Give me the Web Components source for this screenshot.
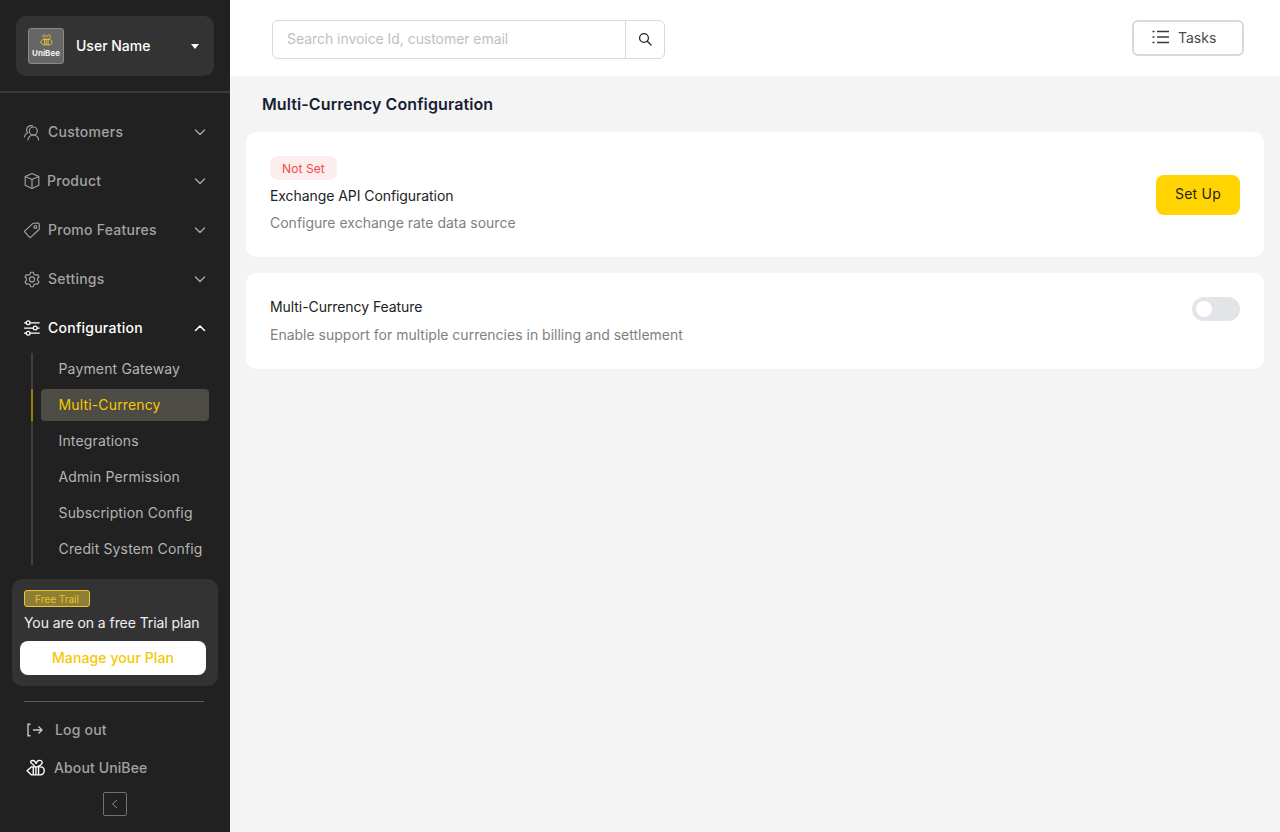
<!DOCTYPE html>
<html><head><meta charset="utf-8"><title>Multi-Currency</title>
<style>
html,body{margin:0;height:100%;}
body{font-family:Inter,"Liberation Sans",sans-serif;font-size:14px;background:#f4f4f4;overflow:hidden}
</style></head><body>
<app-shell>
  <side-bar slot="side">
    <user-card slot="top" name="User Name"></user-card>
    <nav-item label="Customers" icon="users"></nav-item>
    <nav-item label="Product" icon="box" gap="9"></nav-item>
    <nav-item label="Promo Features" icon="tag"></nav-item>
    <nav-item label="Settings" icon="gear"></nav-item>
    <nav-item label="Configuration" icon="sliders" open></nav-item>
    <sub-list>
      <sub-item>Payment Gateway</sub-item>
      <sub-item active>Multi-Currency</sub-item>
      <sub-item>Integrations</sub-item>
      <sub-item>Admin Permission</sub-item>
      <sub-item>Subscription Config</sub-item>
      <sub-item>Credit System Config</sub-item>
    </sub-list>
    <trial-card slot="bottom"></trial-card>
    <foot-links slot="bottom"></foot-links>
  </side-bar>
  <top-bar slot="head"></top-bar>
  <page-title slot="main">Multi-Currency Configuration</page-title>
  <config-card slot="main" style="height:125px">
    <status-tag>Not Set</status-tag>
    <span slot="title">Exchange API Configuration</span>
    <span slot="desc">Configure exchange rate data source</span>
    <yellow-button slot="action">Set Up</yellow-button>
  </config-card>
  <config-card slot="main" style="height:96px" data-top>
    <span slot="title">Multi-Currency Feature</span>
    <span slot="desc">Enable support for multiple currencies in billing and settlement</span>
    <toggle-switch slot="action"></toggle-switch>
  </config-card>
</app-shell>
<script>
const ICONS={
users:'<svg width="18" height="18" viewBox="0 0 18 18" fill="none" stroke="currentColor" stroke-width="1.150" stroke-linecap="round" stroke-linejoin="round"><circle cx="10.300" cy="8" r="4"/><path d="M5 17c0-3 2.500-5 5.300-5s5.300 2 5.300 5"/><path d="M9.500 2.800C6.500 1.900 3.500 4 3.500 7c0 1.200.5 2 1 2.700C3 10.500 1.700 12 1.300 14"/></svg>',
box:'<svg width="18" height="18" viewBox="0 0 18 18" fill="none" stroke="currentColor" stroke-width="1.150" stroke-linejoin="round"><path d="M9 1.500l6.800 3v8.800L9 16.500l-6.800-3.200V4.500z"/><path d="M2.200 4.500L9 7.600l6.800-3.100M9 7.600v8.900"/></svg>',
tag:'<svg width="18" height="18" viewBox="0 0 18 18" fill="none" stroke="currentColor" stroke-width="1.150" stroke-linejoin="round"><path d="M1.300 10.400L9.700 2.600a1.500 1.500 0 0 1 1-.4l4.200-.1a1.300 1.300 0 0 1 1.300 1.300l.1 4.300a1.500 1.500 0 0 1-.5 1.100l-8 7.400a1 1 0 0 1-1.400 0z"/><circle cx="12.300" cy="5.900" r="1.400"/></svg>',
gear:'<svg width="18" height="18" viewBox="0 0 18 18" fill="none" stroke="currentColor" stroke-width="1.150" stroke-linejoin="round"><path d="M7.600 2.200h2.800l.5 2 1.700 1 2-.6 1.400 2.400-1.500 1.500v1.900l1.500 1.500-1.400 2.400-2-.6-1.700 1-.5 2H7.600l-.5-2-1.700-1-2 .6L2 11.900l1.500-1.500V8.500L2 7l1.400-2.400 2 .6 1.700-1z"/><circle cx="9" cy="9.400" r="2.500"/></svg>',
sliders:'<svg width="18" height="18" viewBox="0 0 18 18" fill="none" stroke="currentColor" stroke-width="1.250" stroke-linecap="round"><path d="M7.200 3.800h9M1.500 3.800h1.700M14.200 9h2M1.500 9h8.700M7.200 14.200h9M1.500 14.200h1.700"/><circle cx="5.200" cy="3.800" r="1.900"/><circle cx="12.200" cy="9" r="1.900"/><circle cx="5.200" cy="14.200" r="1.900"/></svg>'
};
const BEE=(c,w,h)=>`<svg width="${w}" height="${h}" viewBox="0 0 18 18" fill="none" stroke="${c}" stroke-width="1.300" stroke-linejoin="round"><path d="M8.400 7.200L6.800 5.300C5.900 4.200 4.300 4 4.300 2.900 4.500 1.300 7.300.8 8.300 2.300L9.500 4.200 10.700 2.300C11.800.8 15 1 15.300 3c.2 1.700-1.900 3.100-4.300 4.200"/><path d="M5 7.500h8.500c2.200 0 3.800 1.600 3.800 3.700s-1.600 3.800-3.800 3.800H5L1 11.200z"/><path d="M6.900 7.500V15M9.400 7.500V15M11.900 7.500V15"/></svg>`;
function def(name,css,html){
  customElements.define(name,class extends HTMLElement{
    constructor(){super();this.attachShadow({mode:'open'});}
    connectedCallback(){
      this.shadowRoot.innerHTML=`<style>${css}</style>${typeof html==='function'?html(this):html}`;
    }
  });
}
def('app-shell',`:host{display:flex;height:100vh;width:100%}
 .r{flex:1;min-width:0;display:flex;flex-direction:column}
 .m{display:flex;flex-direction:column;padding:0 16px;gap:16px;flex:1}`,
 `<slot name="side"></slot><div class="r"><slot name="head"></slot><div class="m"><slot name="main"></slot></div></div>`);
def('side-bar',`:host{display:flex;flex-direction:column;width:230px;flex:none;height:832px;background:#212121;color:#fff}
 .top{padding:16px 16px 15px;border-bottom:2px solid #3a3a3a;flex:none}
 nav{padding-top:14px;flex:1;min-height:0}`,
 `<div class="top"><slot name="top"></slot></div><nav><slot></slot></nav><slot name="bottom"></slot>`);
def('user-card',`:host{display:flex;align-items:center;height:60px;background:#333;border-radius:10px;padding:0 12px;color:#fff;font-size:14px;font-weight:500}
 .logo{width:36px;height:36px;box-sizing:border-box;border:1px solid #8a8a8a;border-radius:3px;background:#666;display:flex;flex-direction:column;align-items:center;justify-content:center;flex:none;font-size:8px;font-weight:700;line-height:10px;gap:1px;color:#eee}
 .n{margin-left:12px;flex:1;padding-bottom:2px}
 .c{width:0;height:0;border:4.500px solid transparent;border-top:5px solid #fff;border-bottom:0;margin-right:3px}`,
 el=>`<div class="logo">${BEE('#e8c33a',14,13)}<span>UniBee</span></div><span class="n">${el.getAttribute('name')}</span><span class="c"></span>`);
def('nav-item',`:host{display:flex;align-items:center;height:49px;padding-left:23px;padding-right:23px;color:#a3a3a3;font-weight:500;font-size:14px;letter-spacing:.25px}
 :host([open]){color:#fff}
 svg{display:block;flex:none}
 .t{flex:1}.i{margin-right:7px}
 .ch{flex:none;width:14px;height:14px}`,
 el=>`<span class="i" style="${el.hasAttribute('gap')?'margin-right:6px':''}">${ICONS[el.getAttribute('icon')]}</span><span class="t">${el.getAttribute('label')}</span><svg class="ch" viewBox="0 0 14 14" fill="none" stroke="currentColor" stroke-width="1.500" stroke-linecap="round" stroke-linejoin="round"><path d="${el.hasAttribute('open')?'M2.500 9.500L7 5l4.500 4.500':'M2.500 5L7 9.500 11.500 5'}"/></svg>`);
def('sub-list',`:host{display:flex;flex-direction:column;gap:4px;margin:1px 21px 0 31px;border-left:2px solid #3f3f3f;padding-left:8px}`,`<slot></slot>`);
def('sub-item',`:host{display:flex;align-items:center;height:32px;box-sizing:border-box;padding:0 0 2px 17.500px;border-radius:4px;color:#b4b4b4;font-size:14px;position:relative;letter-spacing:.15px}
 :host([active]){background:#4d4c44;color:#f5c800}
 :host([active])::before{content:"";position:absolute;left:-10px;top:0;bottom:0;width:2px;background:#987f0c}`,`<slot></slot>`);
def('trial-card',`:host{display:block;margin:0 12px;height:107px;box-sizing:border-box;background:#333;border-radius:10px;padding:11px 12px 0 12px;color:#f0f0f0}
 .b{display:flex;align-items:center;box-sizing:border-box;width:66px;height:17px;justify-content:center;border:1px solid #e6c83f;border-radius:3px;background:#8f7e33;color:#e8c528;font-size:10px}
 .t{font-size:14px;line-height:17px;margin-top:7px;white-space:nowrap;letter-spacing:-.07px}
 button{display:block;margin:10px 0 0 -4px;padding:0 0 2px;width:186px;height:34px;border:0;border-radius:8px;background:#fff;color:#f5c800;font:500 14px Inter,sans-serif;letter-spacing:.1px}`,
 `<div class="b">Free Trail</div><div class="t">You are on a free Trial plan</div><button>Manage your Plan</button>`);
def('foot-links',`:host{display:block;margin:15px 26px 0 24px;padding-bottom:16px;border-top:1px solid #5c5c5c;color:#a3a3a3;font-weight:500;font-size:14px;letter-spacing:.2px}
 .r{display:flex;align-items:center;height:38px}
 .r span{position:relative;top:-1px}
 svg{display:block;flex:none}
 .c{display:flex;align-items:center;justify-content:center;box-sizing:border-box;width:24px;height:24px;border:1px solid #6b7280;border-radius:2px;margin:5px 0 0 79px;color:#8a8a8a}`,
 `<div class="r" style="margin-top:9px"><svg width="18" height="16" viewBox="0 0 18 16" fill="none" stroke="#c8c8c8" stroke-width="1.400" style="margin:0 12px 0 1px"><path d="M5.500 2.200H3v11.600h2.500M8 8h8.800M13.500 4.500L17 8l-3.500 3.500"/></svg><span>Log out</span></div>
 <div class="r">${BEE('#fff',19,19).replace('<svg','<svg style="margin:0 9px 0 2px"')}<span style="letter-spacing:.12px">About UniBee</span></div>
 <div class="c"><svg width="12" height="12" viewBox="0 0 12 12" fill="none" stroke="currentColor" stroke-width="1"><path d="M8 2L3.500 6 8 10"/></svg></div>`);
def('top-bar',`:host{display:flex;align-items:flex-start;justify-content:space-between;height:76px;background:#fff;padding:20px 36px 0 42px;box-sizing:border-box;flex:none}
 .s{display:flex;width:393px;height:39px;box-sizing:border-box;border:1px solid #d9d9d9;border-radius:6px}
 .p{flex:1;padding:0 0 2px 14px;display:flex;align-items:center;color:#bfbfbf;font-size:14px;letter-spacing:-.05px}
 .g{width:39px;box-sizing:border-box;border-left:1px solid #d9d9d9;display:flex;align-items:center;justify-content:center}
 .t{display:flex;align-items:center;box-sizing:border-box;width:112px;height:36px;border:2px solid #d9d9d9;border-radius:6px;padding:0 0 2px 18px;color:#4a4a4a;font-size:14px;gap:9px}`,
 `<div class="s"><div class="p">Search invoice Id, customer email</div><div class="g"><svg width="14" height="14" viewBox="0 0 14 14" fill="none" stroke="#222" stroke-width="1.300" style="margin-bottom:2px"><circle cx="6" cy="6" r="4.400"/><path d="M9.300 9.300L13 13" stroke-linecap="round"/></svg></div></div>
 <div class="t"><svg width="17" height="14" viewBox="0 0 17 14" fill="none" stroke="#3d3440" stroke-width="1.400"><path d="M5 1.500h12M5 7h12M5 12.500h12M.5 1.500h2M.5 7h2M.5 12.500h2"/></svg>Tasks</div>`);
def('page-title',`:host{display:flex;align-items:center;height:24px;padding-left:16px;margin-top:16px;font-size:16px;font-weight:600;color:#172033;letter-spacing:.1px}`,`<slot></slot>`);
def('config-card',`:host{display:flex;align-items:center;justify-content:space-between;background:#fff;border-radius:10px;padding:0 24px;box-sizing:border-box;flex:none}
 :host([data-top]){align-items:flex-start;padding-top:24px}
 .x{display:flex;flex-direction:column;align-items:flex-start}
 .h{font-size:14px;line-height:20px;color:#222;margin-top:6px;letter-spacing:-.07px}
 :host([data-top]) .h{margin-top:0}
 .d{font-size:14px;line-height:20px;color:#7f7f7f;margin-top:7px}
 :host([data-top]) .d{margin-top:8px}`,
 `<div class="x"><slot></slot><div class="h"><slot name="title"></slot></div><div class="d"><slot name="desc"></slot></div></div><slot name="action"></slot>`);
def('status-tag',`:host{display:inline-flex;align-items:center;height:24px;padding:0 12px;border-radius:8px;background:#fdeeee;color:#f5484f;font-size:12px;letter-spacing:.1px}`,`<slot></slot>`);
def('yellow-button',`:host{display:flex;align-items:center;justify-content:center;width:84px;height:40px;box-sizing:border-box;padding-bottom:2px;background:#ffd400;border-radius:8px;color:#1f1f1f;font-size:14px;font-weight:400;letter-spacing:.2px}`,`<slot></slot>`);
def('toggle-switch',`:host{display:block;width:48px;height:24px;border-radius:12px;background:#e3e4e8;position:relative}
 i{position:absolute;left:4px;top:4px;width:16px;height:16px;border-radius:50%;background:#fff}`,`<i></i>`);
</script>
</body></html>
